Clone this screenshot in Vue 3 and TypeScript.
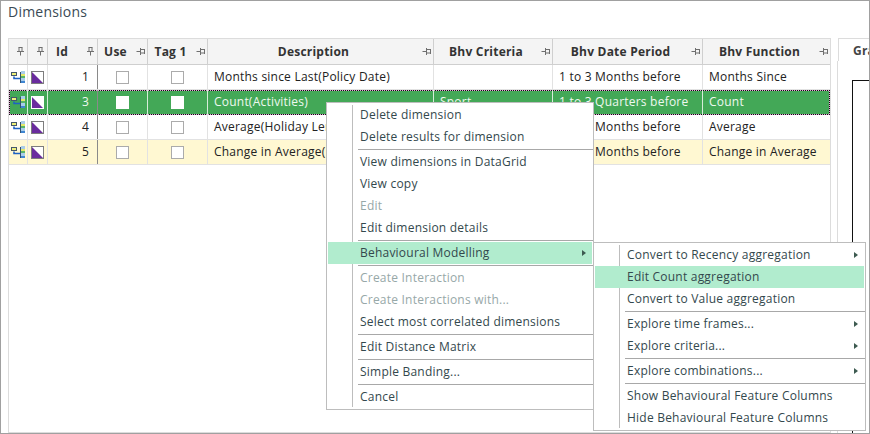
<script setup lang="ts">
interface Row { id: number; desc: string; crit: string; period: string; fn: string; kind?: string }
interface MenuItem { label?: string; sep?: boolean; off?: boolean; hot?: boolean; sub?: boolean }

const columns = [
  { key: 'a', label: '', pin: 'v', cls: 'c-a' },
  { key: 'b', label: '', pin: 'v', cls: 'c-b' },
  { key: 'id', label: 'Id', pin: 'v', cls: 'c-id' },
  { key: 'use', label: 'Use', pin: 'h', cls: 'c-use' },
  { key: 'tag', label: 'Tag 1', pin: 'h', cls: 'c-tag' },
  { key: 'desc', label: 'Description', pin: 'h', cls: 'c-desc' },
  { key: 'crit', label: 'Bhv Criteria', pin: 'h', cls: 'c-crit' },
  { key: 'period', label: 'Bhv Date Period', pin: 'h', cls: 'c-period' },
  { key: 'fn', label: 'Bhv Function', pin: 'h', cls: 'c-fn' }
]

const rows: Row[] = [
  { id: 1, desc: 'Months since Last(Policy Date)', crit: '', period: '1 to 3 Months before', fn: 'Months Since' },
  { id: 3, desc: 'Count(Activities)', crit: 'Sport', period: '1 to 3 Quarters before', fn: 'Count', kind: 'selected' },
  { id: 4, desc: 'Average(Holiday Length)', crit: '', period: '1 to 3 Months before', fn: 'Average' },
  { id: 5, desc: 'Change in Average(Premium)', crit: '', period: '1 to 3 Months before', fn: 'Change in Average', kind: 'warm' }
]

const mainMenu: MenuItem[] = [
  { label: 'Delete dimension' },
  { label: 'Delete results for dimension' },
  { sep: true },
  { label: 'View dimensions in DataGrid' },
  { label: 'View copy' },
  { label: 'Edit', off: true },
  { label: 'Edit dimension details' },
  { sep: true },
  { label: 'Behavioural Modelling', hot: true, sub: true },
  { sep: true },
  { label: 'Create Interaction', off: true },
  { label: 'Create Interactions with...', off: true },
  { label: 'Select most correlated dimensions' },
  { sep: true },
  { label: 'Edit Distance Matrix' },
  { sep: true },
  { label: 'Simple Banding...' },
  { sep: true },
  { label: 'Cancel' }
]

const subMenu: MenuItem[] = [
  { label: 'Convert to Recency aggregation', sub: true },
  { label: 'Edit Count aggregation', hot: true },
  { label: 'Convert to Value aggregation' },
  { sep: true },
  { label: 'Explore time frames...', sub: true },
  { label: 'Explore criteria...', sub: true },
  { sep: true },
  { label: 'Explore combinations...', sub: true },
  { sep: true },
  { label: 'Show Behavioural Feature Columns' },
  { label: 'Hide Behavioural Feature Columns' }
]
</script>

<template>
  <div class="window">
    <div class="title">Dimensions</div>
    <div class="body">
      <div class="grid">
        <div class="row head">
          <div v-for="c in columns" :key="c.key" class="cell" :class="c.cls">
            <span class="label">{{ c.label }}</span>
            <svg v-if="c.pin === 'v'" class="pin" width="9" height="9" viewBox="0 0 9 9">
              <path d="M2.5 .5h4M3 .5v4M6 .5v4M1 4.5h7M4.5 4.5v4" fill="none" stroke="#6f6f6f" />
            </svg>
            <svg v-else class="pin" width="9" height="9" viewBox="0 0 9 9">
              <path d="M.5 4.5h4M4.5 1v7M4.5 2.5h4M4.5 6h4M8.5 2v5" fill="none" stroke="#6f6f6f" />
            </svg>
          </div>
        </div>
        <div v-for="r in rows" :key="r.id" class="row" :class="r.kind">
          <div class="cell c-a icon">
            <svg width="15" height="13" viewBox="0 0 15 13">
              <rect x="0.5" y="1.5" width="5" height="3" fill="#eef07a" stroke="#46586a" />
              <path d="M3 5.5v2h6.5" fill="none" stroke="#1d62c4" stroke-width="1.6" />
              <rect x="10" y="0" width="4" height="3" fill="#a9cdea" />
              <rect x="10" y="3" width="4" height="2" fill="#e6e86a" />
              <rect x="10" y="5" width="4" height="2" fill="#59b56a" />
              <rect x="10" y="7" width="4" height="3" fill="#a9cdea" />
              <rect x="10" y="10" width="4" height="2" fill="#3f86d2" />
              <path d="M9.5 1v11" fill="none" stroke="#33506e" />
            </svg>
          </div>
          <div class="cell c-b icon">
            <div class="swatch">
              <svg width="11" height="11" viewBox="0 0 11 11">
                <path d="M0 0L11 11H0Z" fill="#6a2c9e" />
              </svg>
            </div>
          </div>
          <div class="cell c-id num">{{ r.id }}</div>
          <div class="cell c-use icon"><span class="check"></span></div>
          <div class="cell c-tag icon"><span class="check"></span></div>
          <div class="cell c-desc">{{ r.desc }}</div>
          <div class="cell c-crit">{{ r.crit }}</div>
          <div class="cell c-period">{{ r.period }}</div>
          <div class="cell c-fn">{{ r.fn }}</div>
        </div>
      </div>
      <div class="panel">
        <div class="tab">Graph</div>
        <div class="panel-body"><div class="plot"></div></div>
      </div>
    </div>

    <div class="menu main">
      <div class="gutter"></div>
      <template v-for="(m, i) in mainMenu" :key="i">
        <div v-if="m.sep" class="sep"></div>
        <div v-else class="item" :class="{ off: m.off, hot: m.hot }">
          <span>{{ m.label }}</span>
          <i v-if="m.sub" class="arrow"></i>
        </div>
      </template>
    </div>

    <div class="menu second">
      <div class="gutter"></div>
      <template v-for="(m, i) in subMenu" :key="i">
        <div v-if="m.sep" class="sep"></div>
        <div v-else class="item" :class="{ off: m.off, hot: m.hot }">
          <span>{{ m.label }}</span>
          <i v-if="m.sub" class="arrow"></i>
        </div>
      </template>
    </div>
  </div>
</template>

<style>
html, body { margin: 0; background: #fff; }
</style>

<style scoped>
.window {
  position: relative;
  box-sizing: border-box;
  width: 870px;
  height: 434px;
  overflow: hidden;
  border: 1px solid #a0a0a0;
  background: #fff;
  font-family: "Open Sans", "Noto Sans", sans-serif;
  font-size: 12px;
  letter-spacing: 0.22px;
  color: #222;
}
.title {
  height: 37px;
  box-sizing: border-box;
  padding: 2px 0 0 7px;
  font-size: 14px;
  line-height: 18px;
  color: #3a4a55;
}
.body { display: flex; height: 395px; }
.grid {
  box-sizing: border-box;
  width: 823px;
  margin-left: 7px;
  border: 1px solid #dcdcdc;
}
.row {
  display: flex;
  height: 25px;
  box-sizing: border-box;
  border-bottom: 1px solid #e2e2e2;
  overflow: hidden;
}
.row.head {
  height: 26px;
  background: #f4f4f4;
  border-bottom: 1px solid #cfcfcf;
  font-weight: 700;
  color: #333;
}
.row.warm { background: #fff8d2; }
.row.selected {
  background: #43a857;
  color: #eef8ef;
  border-bottom: 0;
  outline: 1px dotted #111;
  outline-offset: -1px;
  box-shadow: inset 0 0 0 1px #e3a4d6;
}
.cell {
  position: relative;
  box-sizing: border-box;
  display: flex;
  align-items: center;
  flex: none;
  border-right: 1px solid #e2e2e2;
  padding: 0 6px 2px;
  white-space: nowrap;
  overflow: hidden;
  height: 100%;
}
.head .cell { border-right-color: #cfcfcf; justify-content: center; padding: 0 14px 0 0; }
.c-a { width: 19px; }
.c-b { width: 20px; }
.c-id { width: 50px; border-right: 1px solid #8a8a8a !important; }
.head .c-id { justify-content: flex-start; padding-left: 8px; border-right: 1px solid #cfcfcf !important; }
.c-use { width: 50px; }
.c-tag { width: 60px; }
.c-desc { width: 226px; }
.c-crit { width: 119px; }
.c-period { width: 150px; }
.c-fn { width: 127px; border-right: 0; }
.pin { position: absolute; right: 2px; top: 8px; }
.icon { justify-content: center; padding: 0; }
.num { justify-content: flex-end; padding-right: 8px; }
.swatch {
  width: 11px;
  height: 11px;
  border: 1px solid #7d7d7d;
  background: #fff;
  display: flex;
  line-height: 0;
}
.selected .swatch { border-color: #fff; }
.check {
  box-sizing: border-box;
  width: 13px;
  height: 13px;
  background: #fff;
  border: 1px solid #ababab;
}
.selected .check { border-color: #fff; }
.selected .cell { border-right-color: #d6ecd9; }
.panel {
  flex: 1;
  margin-left: 6px;
  display: flex;
  flex-direction: column;
  min-width: 0;
  min-height: 0;
}
.tab {
  flex: none;
  height: 23px;
  box-sizing: border-box;
  margin-left: 1px;
  padding: 3px 0 0 14px;
  border-left: 1px solid #dcdcdc;
  border-top: 1px solid #dcdcdc;
  font-weight: 700;
  color: #444;
  white-space: nowrap;
  overflow: hidden;
}
.panel-body {
  flex: 1;
  min-height: 0;
  overflow: hidden;
  border-left: 1px solid #dcdcdc;
  padding: 19px 0 0 14px;
}
.plot { height: 400px; border-left: 1px solid #111; border-top: 1px solid #111; }
.menu {
  position: absolute;
  box-sizing: border-box;
  padding: 1px;
  background: #fff;
  border: 1px solid #bdbdbd;
  color: #33484d;
}
.menu.main { left: 325px; top: 101px; width: 268px; height: 308px; }
.menu.second { left: 592px; top: 241px; width: 273px; height: 189px; }
.gutter { position: absolute; top: 2px; bottom: 2px; left: 25px; width: 1px; background: #bdbdbd; }
.item {
  position: relative;
  display: flex;
  align-items: center;
  justify-content: space-between;
  height: 22px;
  padding: 0 0 2px 32px;
  box-sizing: border-box;
  white-space: nowrap;
}
.item.off { color: #97a8a8; }
.item.hot { background: #b1ecce; }
.sep { height: 3px; margin-left: 30px; margin-right: -1px; position: relative; }
.sep::before { content: ""; position: absolute; left: 0; right: 0; top: 1px; height: 1px; background: #a8a8a8; }
.arrow {
  position: absolute;
  right: 6px;
  top: 8px;
  width: 0;
  height: 0;
  border-left: 4px solid #3d5a50;
  border-top: 3px solid transparent;
  border-bottom: 3px solid transparent;
}
</style>
